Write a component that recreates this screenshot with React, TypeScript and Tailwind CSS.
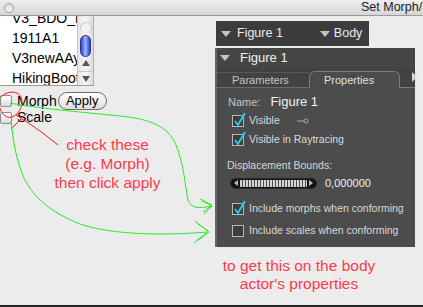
import React from "react";

function PanelCheck({ checked, label }: { checked: boolean; label: string }) {
  return (
    <div className="flex items-center h-[18px] pl-[15px]">
      <div className="relative w-[12px] h-[12px] border border-[#b8b8b8] bg-[#3c3c3c]">
        {checked && (
          <svg className="absolute left-[0px] top-[-4px]" width="14" height="15" viewBox="0 0 14 15">
            <path d="M2 9 L5 13 L12 1" stroke="#2fc6e8" strokeWidth="2" fill="none" />
          </svg>
        )}
      </div>
      <span className="ml-[5px] text-[10.5px] text-[#dadada]">{label}</span>
    </div>
  );
}

function DownTri({ cls }: { cls: string }) {
  return (
    <svg className={cls} width="10" height="6" viewBox="0 0 10 6">
      <path d="M0 0 L10 0 L5 6 Z" fill="#c4c4c4" />
    </svg>
  );
}

function MacCheck() {
  return (
    <div className="w-[12px] h-[12px] rounded-[2px] border border-[#8c8c8c] bg-gradient-to-b from-[#ffffff] to-[#dcdcdc]" />
  );
}

export default function App() {
  return (
    <div
      className="relative w-[423px] h-[307px] overflow-hidden bg-[#ececec] flex flex-col"
      style={{ fontFamily: '"Liberation Sans", Arial, sans-serif' }}
    >
      {/* title bar */}
      <div className="h-[16px] shrink-0 bg-gradient-to-b from-[#eeeeee] to-[#d6d6d6] border-b border-[#9a9a9a] flex items-center relative">
        <div className="ml-[4px] w-[10px] h-[10px] rounded-full border border-[#9c9c9c] bg-gradient-to-b from-[#dcdcdc] to-[#f8f8f8]" />
        <span className="absolute left-[361px] top-[0px] text-[12.5px] leading-[15px] text-[#222] whitespace-nowrap">
          Set Morph/Scale
        </span>
      </div>

      <div className="flex flex-1">
        {/* left column */}
        <div className="w-[215px] shrink-0 flex flex-col">
          {/* list */}
          <div className="w-[94px] h-[70px] flex border-b border-[#9a9a9a] border-r border-r-[#b0b0b0] bg-white overflow-hidden">
            <div className="flex-1 overflow-hidden">
              <div className="mt-[-8px] text-[14px] leading-[20px] text-black pl-[12px] whitespace-nowrap">
                <div>V3_BDO_R</div>
                <div>1911A1</div>
                <div>V3newAAyx</div>
                <div>HikingBoots</div>
              </div>
            </div>
            <div className="w-[16px] bg-gradient-to-r from-[#e6e6e6] via-[#f6f6f6] to-[#dcdcdc] border-l border-[#c4c4c4] flex flex-col items-center">
              <div className="mt-[6px] w-[12px] h-[8px] rounded-t-full border border-b-0 border-[#c8c8c8] bg-[#f2f2f2]" />
              <div className="mt-[5px] w-[11px] h-[22px] rounded-full bg-gradient-to-r from-[#3345c8] via-[#9fb4ff] to-[#2a3cc0] border border-[#2530a0]" />
              <div className="flex-1" />
              <svg width="8" height="6" viewBox="0 0 8 6" className="mb-[5px]">
                <path d="M4 0 L8 6 L0 6 Z" fill="#555" />
              </svg>
              <div className="w-full h-px bg-[#c8c8c8]" />
              <svg width="8" height="6" viewBox="0 0 8 6" className="mt-[4px] mb-[3px]">
                <path d="M0 0 L8 0 L4 6 Z" fill="#555" />
              </svg>
            </div>
          </div>

          {/* morph row */}
          <div className="mt-[6px] flex items-center h-[18px]">
            <MacCheck />
            <span className="ml-[5px] text-[14px] text-black">Morph</span>
            <div className="ml-[1px] w-[49px] h-[18px] rounded-full border border-[#6e6e6e] bg-gradient-to-b from-[#ffffff] to-[#dedede] flex items-center justify-center text-[13px] text-black">
              Apply
            </div>
          </div>
          <div className="mt-[1px] flex items-center h-[13px]">
            <MacCheck />
            <span className="ml-[5px] text-[14px] text-black">Scale</span>
          </div>

          <div className="mt-[11px] text-center text-[15.5px] leading-[19px] text-[#fb3a4c]">
            <div>check these</div>
            <div>(e.g. Morph)</div>
            <div>then click apply</div>
          </div>
        </div>

        {/* right column */}
        <div className="flex-1 flex flex-col">
          <div className="mt-[5px] ml-[1px] w-[153px] h-[25px] bg-[#3c3c3c] flex items-center text-[12.5px] text-[#ececec]">
            <DownTri cls="ml-[5px]" />
            <span className="ml-[6px]">Figure 1</span>
            <DownTri cls="ml-[37px]" />
            <span className="ml-[4px]">Body</span>
          </div>

          <div className="mt-[2px] w-[200px] h-[199px] bg-[#4c4c4c] border-l-2 border-[#666] flex flex-col relative">
            {/* header */}
            <div className="h-[20px] bg-[#454545] flex items-center">
              <DownTri cls="ml-[3px]" />
              <span className="ml-[10px] text-[13px] text-[#f0f0f0]">Figure 1</span>
            </div>
            {/* tabs */}
            <div className="h-[20px] bg-[#424242] flex items-end relative">
              <div className="w-[92px] h-[16px] border-t border-[#585858] flex items-center pl-[15px] text-[11px] text-[#c6c6c6] border-b border-b-[#6a6a6a]">
                Parameters
              </div>
              <div className="w-[91px] h-[17px] rounded-t-[6px] border border-b-0 border-[#7c7c7c] bg-[#4c4c4c] flex items-center pl-[14px] text-[11px] text-[#e0e0e0]">
                Properties
              </div>
              <div className="flex-1 h-[1px] bg-[#7c7c7c]" />
              <svg className="absolute right-[-2px] top-[4px]" width="5" height="10" viewBox="0 0 5 10">
                <path d="M0 0 L5 5 L0 10 Z" fill="#d8d8d8" />
              </svg>
            </div>
            {/* content */}
            <div className="flex-1 flex flex-col">
              <div className="mt-[4px] h-[20px] flex items-center pl-[11px] text-[11px]">
                <span className="text-[#c4c4c4]">Name:</span>
                <span className="ml-[10px] text-[13px] text-[#f2f2f2]">Figure 1</span>
              </div>
              <div className="flex items-center">
                <PanelCheck checked label="Visible" />
                <svg className="ml-[17px]" width="12" height="6" viewBox="0 0 12 6">
                  <path d="M0 3 L7 3" stroke="#9a9a9a" strokeWidth="1.2" />
                  <circle cx="9" cy="3" r="2" stroke="#9a9a9a" strokeWidth="1.2" fill="none" />
                </svg>
              </div>
              <div className="mt-[1px]">
                <PanelCheck checked label="Visible in Raytracing" />
              </div>
              <div className="mt-[9px] h-[16px] flex items-center pl-[10px] text-[10.5px] text-[#d6d6d6]">
                Displacement Bounds:
              </div>
              <div className="mt-[2px] h-[14px] flex items-center pl-[13px]">
                <div className="w-[87px] h-[11px] rounded-full bg-[#141414] border border-[#2a2a2a] flex items-center px-[3px]">
                  <svg width="4" height="6" viewBox="0 0 4 6">
                    <path d="M4 0 L0 3 L4 6 Z" fill="#bbb" />
                  </svg>
                  <div className="flex-1 mx-[2px] h-[7px] bg-[repeating-linear-gradient(90deg,#e8e8e8_0px,#e8e8e8_2px,#555_2px,#555_3px)] rounded-[1px] opacity-90" />
                  <svg width="4" height="6" viewBox="0 0 4 6">
                    <path d="M0 0 L4 3 L0 6 Z" fill="#bbb" />
                  </svg>
                </div>
                <span className="ml-[8px] text-[11px] text-[#f0f0f0]">0,000000</span>
              </div>
              <div className="mt-[10px]">
                <PanelCheck checked label="Include morphs when conforming" />
              </div>
              <div className="mt-[4px]">
                <PanelCheck checked={false} label="Include scales when conforming" />
              </div>
            </div>
          </div>

          <div className="mt-[10px] w-[168px] text-center text-[15.5px] leading-[18px] text-[#fb3a4c]">
            <div>to get this on the body</div>
            <div>actor's properties</div>
          </div>
        </div>
      </div>

      <div className="h-[2px] shrink-0 bg-[#242424]" />

      {/* annotations */}
      <svg className="absolute left-0 top-0 pointer-events-none" width="423" height="307" viewBox="0 0 423 307">
        <g stroke="#ff1a1a" strokeWidth="1" fill="none">
          <path d="M1 97 C 6 91, 18 90, 21 97 C 24 104, 20 114, 12 117 C 6 119, 1 113, 0 108" />
          <path d="M11 129 L 27 113" />
          <path d="M16 115 L 30 124 L 44 134 L 58 145" />
        </g>
        <g stroke="#22ee22" strokeWidth="1" fill="none">
          <path d="M10 103 C 35 108, 80 112, 120 116 C 150 119, 168 126, 176 145 C 184 165, 185 185, 188 200 C 191 208, 198 209, 211 206" />
          <path d="M200 199 L 212 205 L 203 212 M 202 201 L 211 205 M 204 214 L 212 206" />
          <path d="M11 121 C 13 140, 16 160, 24 178 C 34 198, 50 212, 80 224 C 100 231, 130 234, 160 234 C 180 234, 195 233, 208 232" />
          <path d="M195 221 L 209 232 L 194 243 M 198 224 L 208 231 M 197 240 L 207 233" />
        </g>
      </svg>
    </div>
  );
}
